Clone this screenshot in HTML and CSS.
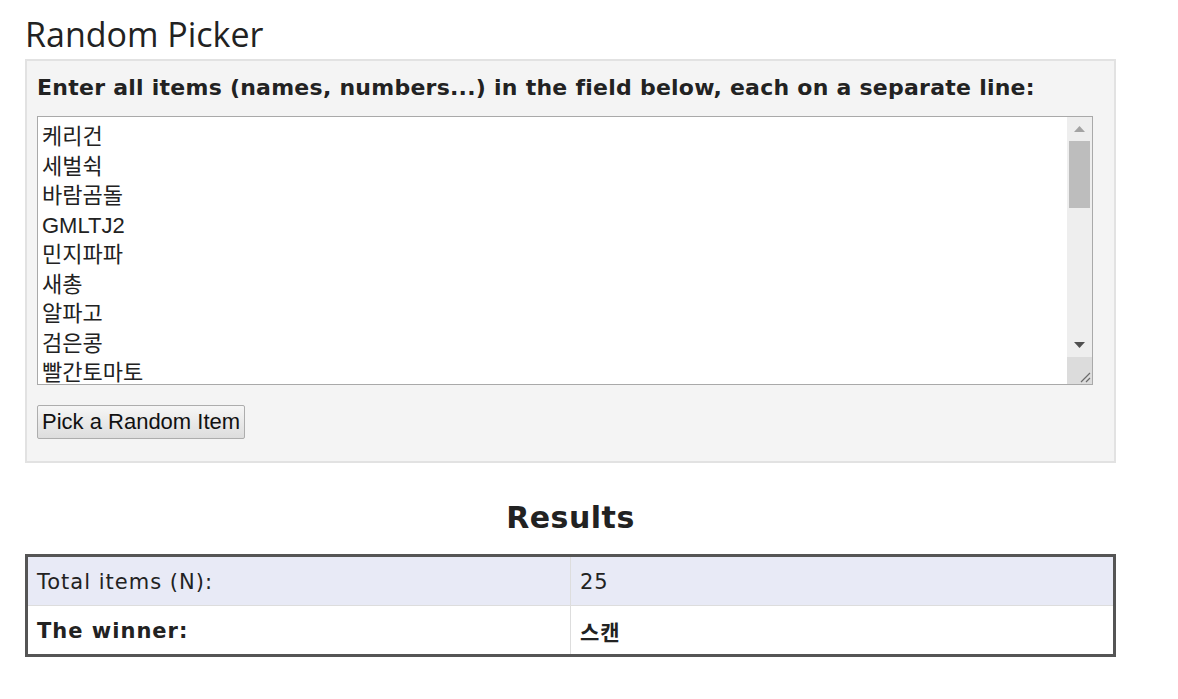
FILE: index.html
```html
<!DOCTYPE html>
<html lang="ko">
<head>
<meta charset="utf-8">
<title>Random Picker</title>
<link rel="stylesheet" href="styles.css">
</head>
<body>
<div class="page">
  <h1 class="title">Random Picker</h1>
  <div class="panel">
    <label class="prompt" for="items">Enter all items (names, numbers...) in the field below, each on a separate line:</label>
    <div class="editor">
      <textarea id="items" class="items">케리건
세벌쉭
바람곰돌
GMLTJ2
민지파파
새총
알파고
검은콩
빨간토마토
스캔
하늘바다
초코우유
달빛나무
블루문
고양이발
파란하늘
치즈볼
토끼풀
별사탕
호두과자
구름빵
솜사탕
바닐라
레몬차
코코넛</textarea>
      <div class="scrollbar" aria-hidden="true">
        <div class="sb-btn">
          <svg width="11" height="6" viewBox="0 0 11 6"><polygon points="0,6 11,6 5.5,0" fill="#a3a3a3"/></svg>
        </div>
        <div class="sb-track">
          <div class="sb-thumb"></div>
        </div>
        <div class="sb-btn">
          <svg width="11" height="6" viewBox="0 0 11 6"><polygon points="0,0 11,0 5.5,6" fill="#505050"/></svg>
        </div>
        <div class="sb-resizer">
          <svg width="12" height="12" viewBox="0 0 12 12"><path d="M11 2 L2 11 M11 7 L7 11" stroke="#6b6b6b" stroke-width="1.2" fill="none"/></svg>
        </div>
      </div>
    </div>
    <button class="pick" type="button">Pick a Random Item</button>
  </div>
  <h2 class="results-title">Results</h2>
  <table class="results">
    <tr class="row-alt">
      <td class="cell">Total items (N):</td>
      <td class="cell">25</td>
    </tr>
    <tr>
      <td class="cell strong">The winner:</td>
      <td class="cell strong">스캔</td>
    </tr>
  </table>
</div>
</body>
</html>
```
FILE: styles.css
```css
html, body {
  margin: 0;
  padding: 0;
  background: #ffffff;
  color: #222222;
}

.page {
  width: 1091px;
  margin-left: 25px;
  font-family: "DejaVu Sans", Verdana, "Noto Sans CJK KR", sans-serif;
}

.title {
  font-family: "Open Sans", "Noto Sans", sans-serif;
  font-weight: 400;
  font-size: 34px;
  line-height: 40px;
  margin: 14px 0 5px 0;
  color: #222222;
}

.panel {
  background: #f4f4f4;
  border: 2px solid #e2e2e2;
  padding: 12px 22px 22px 10px;
  display: flex;
  flex-direction: column;
  align-items: flex-start;
}

.prompt {
  font-weight: bold;
  font-size: 22px;
  letter-spacing: 0.25px;
  line-height: 30px;
  color: #222222;
  margin-bottom: 13px;
}

.editor {
  position: relative;
  width: 1056px;
  height: 269px;
}

.items {
  display: block;
  box-sizing: border-box;
  width: 100%;
  height: 100%;
  border: 1px solid #a9a9a9;
  background: #ffffff;
  font-family: "Liberation Sans", Arial, "Noto Sans CJK KR", sans-serif;
  font-size: 22px;
  line-height: 29.5px;
  padding: 5px 30px 2px 4px;
  color: #222222;
  margin: 0;
  resize: none;
  overflow: hidden;
}

.scrollbar {
  position: absolute;
  top: 1px;
  right: 1px;
  bottom: 1px;
  width: 25px;
  background: #eeeeee;
  display: flex;
  flex-direction: column;
}

.sb-btn {
  height: 24px;
  display: flex;
  align-items: center;
  justify-content: center;
}

.sb-track {
  flex: 1;
  padding: 0 2px;
}

.sb-thumb {
  height: 67px;
  background: #bdbdbd;
}

.sb-resizer {
  height: 26px;
  background: #dcdcdc;
  display: flex;
  align-items: flex-end;
  justify-content: flex-end;
  padding: 0 1px 1px 0;
}

.pick {
  margin-top: 20px;
  font-family: "Liberation Sans", Arial, sans-serif;
  font-size: 22px;
  line-height: 24px;
  padding: 4px 4px 4px 4px;
  color: #111111;
  background: linear-gradient(#f6f6f6, #dddddd);
  border: 1px solid #adadad;
  border-radius: 2px;
}

.results-title {
  text-align: center;
  font-weight: bold;
  font-size: 30px;
  letter-spacing: 0.5px;
  line-height: 34px;
  margin: 38px 0 19px 0;
  color: #222222;
}

.results {
  width: 100%;
  border-collapse: collapse;
  border: 3px solid #555555;
  font-size: 21px;
  letter-spacing: 1px;
}

.row-alt {
  background: #e8eaf6;
}

.cell {
  width: 50%;
  height: 46px;
  padding: 2px 9px 0 9px;
  border: 1px solid #dddddd;
  color: #222222;
}

.strong {
  font-weight: bold;
}
```
